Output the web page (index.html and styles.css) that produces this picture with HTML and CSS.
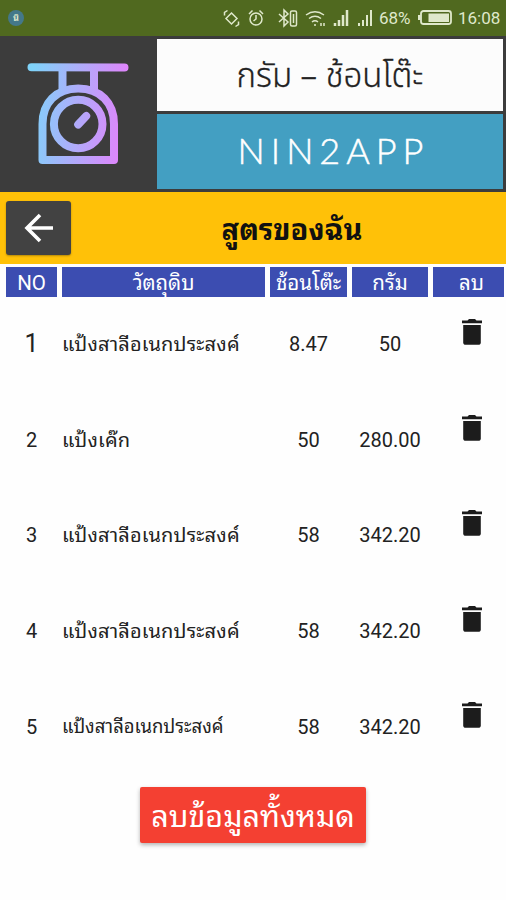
FILE: index.html
```html
<!DOCTYPE html>
<html lang="th">
<head>
<meta charset="UTF-8">
<meta name="viewport" content="width=device-width, initial-scale=1.0">
<title>สูตรของฉัน</title>
<link rel="stylesheet" href="styles.css">
</head>
<body>

<div class="status-bar">
    <span class="app-dot">นิ</span>
    <svg class="status-icons" width="150" height="20" viewBox="0 0 150 20" fill="none" stroke="#dfe8cb" stroke-width="1.5">
        <!-- rotate -->
        <path d="M8.500 5l5.500 5.500-5.500 5.500-5.500-5.500z M1.500 7.500V4.500L4.500 2.500 M15.500 13.500v3L12.500 18.500"/>
        <!-- alarm -->
        <circle cx="33" cy="11" r="6"/>
        <path d="M33 7v4l-2.500 2 M26 6l3.500-3.500 M40 6l-3.500-3.500"/>
        <!-- bluetooth -->
        <path d="M56 6l9 8-4 4V2l4 4-9 8"/>
        <rect x="67.500" y="3" width="6" height="15" rx="1.500"/>
        <path d="M70.500 6v9"/>
        <!-- wifi -->
        <path d="M83 7q9-6.500 18 0 M86 10.500q6-4.500 12 0 M89 14q3-2.500 6 0"/>
        <path d="M91 17h2 M98 15v3 M101 15v3"/>
        <!-- signal -->
        <path d="M112 15v3 M116 12v6 M120 7v11 M124 2v16" stroke-width="2.500"/>
        <path d="M136 15v3 M140 12v6 M144 7v11 M148 2v16" stroke-width="2"/>
    </svg>
    <span class="percent">68%</span>
    <svg class="battery" width="34" height="16" viewBox="0 0 34 16">
        <rect x="3" y="1" width="30" height="13" rx="2.500" fill="none" stroke="#dfe8cb" stroke-width="1.800"/>
        <rect x="0" y="5" width="2.500" height="5" fill="#dfe8cb"/>
        <rect x="10.500" y="3.500" width="20.500" height="8.500" fill="#dfe8cb"/>
    </svg>
    <span class="clock">16:08</span>
</div>

<header class="banner">
    <div class="logo">
        <svg width="104" height="104" viewBox="0 0 104 104" fill="none" stroke="url(#scale)" stroke-width="8" stroke-linecap="round" stroke-linejoin="round">
            <defs>
                <linearGradient id="scale" gradientUnits="userSpaceOnUse" x1="4" y1="50" x2="98" y2="58">
                    <stop offset="0" stop-color="#7fd3fa"/>
                    <stop offset="1" stop-color="#df85fb"/>
                </linearGradient>
            </defs>
            <path d="M6.500 5.300L99.500 5.400"/>
            <path d="M37.500 9v19M69 9v19" stroke-linecap="butt"/>
            <path d="M17.500 98V62C17.500 41 31 26.500 53.200 26.500S89 41 89 62V98Z"/>
            <circle cx="53.200" cy="62" r="24.300"/>
            <path d="M53.200 62.500l8-8.500"/>
        </svg>
    </div>
    <div class="titles">
        <div class="title">กรัม – ช้อนโต๊ะ</div>
        <div class="brand">NIN2APP</div>
    </div>
</header>

<div class="toolbar">
    <button class="back" aria-label="Back">
        <svg width="30" height="30" viewBox="0 0 30 30" fill="none" stroke="#fff" stroke-width="3.600">
            <path d="M29 15H3M16 2L3 15l13 13"/>
        </svg>
    </button>
    <h1>สูตรของฉัน</h1>
</div>

<div class="grid head">
    <div>NO</div>
    <div>วัตถุดิบ</div>
    <div>ช้อนโต๊ะ</div>
    <div>กรัม</div>
    <div class="del">ลบ</div>
</div>

<main id="recipes"></main>

<div class="actions">
    <button class="clear">ลบข้อมูลทั้งหมด</button>
</div>

<script>
    const recipes = [
        { name: "แป้งสาลีอเนกประสงค์", spoon: "8.47", gram: "50", cls: "first" },
        { name: "แป้งเค๊ก", spoon: "50", gram: "280.00", cls: "" },
        { name: "แป้งสาลีอเนกประสงค์", spoon: "58", gram: "342.20", cls: "" },
        { name: "แป้งสาลีอเนกประสงค์", spoon: "58", gram: "342.20", cls: "" },
        { name: "แป้งสาลีอเนกประสงค์", spoon: "58", gram: "342.20", cls: "last" }
    ];

    const list = document.getElementById('recipes');
    recipes.forEach((r, i) => {
        const row = document.createElement('div');
        row.className = 'grid row ' + r.cls;
        row.innerHTML = `
            <div class="no">${i + 1}</div>
            <div class="name">${r.name}</div>
            <div>${r.spoon}</div>
            <div>${r.gram}</div>
            <div class="trash">
                <svg width="20" height="26" viewBox="0 0 20 26" fill="#1c1c1c">
                    <path d="M0 1.500h5.500L7 0h6l1.500 1.500H20v2.700H0z"/>
                    <path d="M1.200 6h17.600v17.200a2.600 2.600 0 0 1-2.600 2.600H3.800a2.600 2.600 0 0 1-2.600-2.600z"/>
                </svg>
            </div>
        `;
        list.appendChild(row);
    });
</script>

</body>
</html>
```
FILE: styles.css
```css
* {
    box-sizing: border-box;
}
body {
    margin: 0;
    height: 900px;
    overflow: hidden;
    background: #fefefe;
    color: #222;
    font-family: Roboto, "Noto Sans Thai Looped", "Noto Looped Thai", Loma, Waree, Garuda, "Noto Serif Thai", serif;
}
button {
    border: 0;
    padding: 0;
    font-family: inherit;
}
.status-bar {
    height: 36px;
    display: flex;
    align-items: center;
    padding: 0 6px 0 8px;
    background: #50691f;
    color: #dfe8cb;
    font-size: 17px;
}
.app-dot {
    width: 16px;
    height: 16px;
    border-radius: 50%;
    background: #44788a;
    font-size: 9px;
    font-weight: bold;
    line-height: 16px;
    text-align: center;
}
.status-icons {
    margin-left: auto;
}
.percent {
    width: 32px;
    margin-left: 6px;
}
.battery {
    margin-left: 7px;
}
.clock {
    width: 42px;
    margin-left: 6px;
}
.banner {
    height: 156px;
    display: flex;
    background: #3c3c3c;
    padding: 3px 3px 3px 0;
}
.logo {
    width: 157px;
    padding: 23px 0 0 25px;
}
.titles {
    flex: 1;
    display: flex;
    flex-direction: column;
    gap: 3px;
}
.title,
.brand {
    display: flex;
    align-items: center;
    justify-content: center;
}
.title {
    height: 72px;
    background: #fcfcfc;
    font-family: "Noto Sans", "Noto Sans Thai", sans-serif;
    font-size: 33px;
    font-weight: 300;
    line-height: 40px;
    -webkit-text-stroke: 0.3px #222;
}
.brand {
    flex: 1;
    padding: 0 0 3px 7px;
    background: #439fc2;
    color: #fff;
    font-family: Lato, sans-serif;
    font-size: 36px;
    font-weight: 300;
    letter-spacing: 6px;
    -webkit-text-stroke: 0.5px #fff;
}
.toolbar {
    height: 72px;
    display: flex;
    align-items: center;
    padding: 0 6px;
    background: #ffc108;
}
.back {
    width: 65px;
    height: 54px;
    display: flex;
    align-items: center;
    justify-content: center;
    border-radius: 3px;
    background: #424242;
    box-shadow: 0 1px 2px rgba(0,0,0,0.3);
}
h1 {
    flex: 1;
    margin: 0;
    padding: 3px 0 0 13px;
    font-size: 29px;
    line-height: 40px;
    text-align: center;
    color: #111;
}
.grid {
    display: grid;
    grid-template-columns: 51px 203px 77px 76px 71px;
    column-gap: 5px;
    padding-left: 6px;
    text-align: center;
}
.head {
    margin-top: 3px;
}
.head div {
    height: 30px;
    background: #3c4db1;
    color: #fff;
    font-size: 20.500px;
    line-height: 32px;
    white-space: nowrap;
}
.head .del {
    padding-left: 6px;
}
.row {
    height: 95.700px;
    padding-top: 21px;
    font-size: 20px;
    line-height: 52px;
}
.name {
    text-align: left;
    white-space: nowrap;
    letter-spacing: 0.200px;
}
.first .no {
    font-size: 25px;
}
.last .name {
    font-size: 18.500px;
    letter-spacing: 0;
}
.trash {
    padding-left: 6px;
    padding-top: 1px;
    line-height: 0;
}
.actions {
    display: flex;
    justify-content: center;
    margin-top: 12px;
}
.clear {
    width: 226px;
    height: 56px;
    padding-top: 4px;
    border-radius: 2px;
    background: #f44032;
    color: #fff;
    font-size: 30.500px;
    line-height: 52px;
    white-space: nowrap;
    box-shadow: 0 2px 4px rgba(0,0,0,0.3);
}
```
